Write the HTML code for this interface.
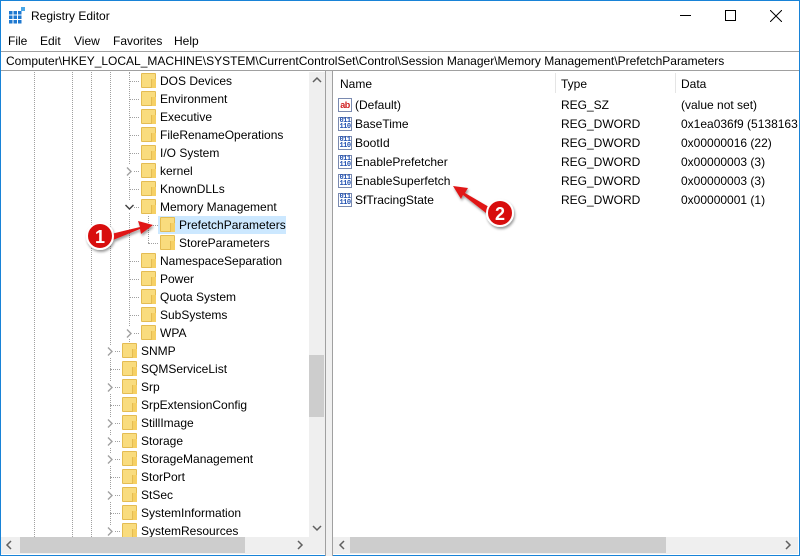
<!DOCTYPE html>
<html><head><meta charset="utf-8"><style>
*{margin:0;padding:0;box-sizing:border-box}
body{width:800px;height:556px;background:#fff;font-family:"Liberation Sans",sans-serif;font-size:12px;color:#000;position:relative;overflow:hidden}
.win{position:absolute;left:0;top:0;width:800px;height:556px;border:1px solid #1883d7}
.abs{position:absolute}
.t{position:absolute;white-space:nowrap;line-height:18px}
.fold{position:absolute;width:15px;height:15px;background:#f9dc7e;border:1px solid #e4bc52;border-radius:1px}
.fold:after{content:"";position:absolute;right:-1px;bottom:-1px;width:4px;height:9px;border-left:1px solid #e4bc52;background:#f6d064}
.vd{position:absolute;width:0;border-left:1px dotted #a0a0a0}
.hd{position:absolute;height:0;border-top:1px dotted #a0a0a0}
.chev{position:absolute}
.ic{position:absolute;width:14px;height:14px;border:1px solid #7a8ab0;background:#fff;font-size:7px;line-height:6px;color:#2050b0;font-weight:bold;letter-spacing:-0.5px;text-align:center;font-family:"Liberation Mono",monospace}
</style></head><body>
<div class="win"></div>
<svg class="abs" style="left:9px;top:7px" width="17" height="17" viewBox="0 0 17 17">
<g fill="#1e78d0"><rect x="0" y="4" width="3.5" height="3.5"/><rect x="4.5" y="4" width="3.5" height="3.5"/><rect x="9" y="4" width="3.5" height="3.5"/><rect x="0" y="8.5" width="3.5" height="3.5"/><rect x="4.5" y="8.5" width="3.5" height="3.5"/><rect x="9" y="8.5" width="3.5" height="3.5"/><rect x="0" y="13" width="3.5" height="3.5"/><rect x="4.5" y="13" width="3.5" height="3.5"/><rect x="9" y="13" width="3.5" height="3.5"/></g>
<rect x="12" y="0" width="4" height="4" fill="#4aa8e8"/></svg>
<div class="t" style="left:31px;top:7px;font-size:12px">Registry Editor</div>
<div class="abs" style="left:680px;top:15px;width:11px;border-top:1px solid #000"></div>
<div class="abs" style="left:725px;top:10px;width:11px;height:11px;border:1px solid #000"></div>
<svg class="abs" style="left:770px;top:10px" width="12" height="12"><path d="M0 0L12 12M12 0L0 12" stroke="#000" stroke-width="1"/></svg>
<div class="t" style="left:8px;top:32px">File</div>
<div class="t" style="left:40px;top:32px">Edit</div>
<div class="t" style="left:74px;top:32px">View</div>
<div class="t" style="left:113px;top:32px">Favorites</div>
<div class="t" style="left:174px;top:32px">Help</div>
<div class="abs" style="left:1px;top:51px;width:798px;height:20px;border-top:1px solid #a0a0a0;border-bottom:1px solid #a0a0a0"></div>
<div class="t" style="left:6px;top:52px">Computer\HKEY_LOCAL_MACHINE\SYSTEM\CurrentControlSet\Control\Session Manager\Memory Management\PrefetchParameters</div>
<div class="abs" style="left:1px;top:71px;width:324px;height:483px;background:#fff"></div>
<div class="vd" style="left:34px;top:72px;height:465px"></div>
<div class="vd" style="left:72px;top:72px;height:465px"></div>
<div class="vd" style="left:91px;top:72px;height:465px"></div>
<div class="vd" style="left:110px;top:72px;height:465px"></div>
<div class="vd" style="left:129px;top:72px;height:270px"></div>
<div class="vd" style="left:148px;top:216px;height:27px"></div>
<div id="tree"></div>
<div class="abs" style="left:309px;top:72px;width:16px;height:465px;background:#efefef"></div>
<div class="abs" style="left:309px;top:355px;width:15px;height:62px;background:#cdcdcd"></div>
<svg class="abs" style="left:312px;top:76px" width="10" height="8"><path d="M1 6L5 2L9 6" stroke="#606060" stroke-width="1.5" fill="none"/></svg>
<svg class="abs" style="left:312px;top:524px" width="10" height="8"><path d="M1 2L5 6L9 2" stroke="#606060" stroke-width="1.5" fill="none"/></svg>
<div class="abs" style="left:1px;top:537px;width:324px;height:17px;background:#efefef"></div>
<div class="abs" style="left:20px;top:537px;width:225px;height:16px;background:#cdcdcd"></div>
<svg class="abs" style="left:5px;top:540px" width="8" height="10"><path d="M6 1L2 5L6 9" stroke="#606060" stroke-width="1.5" fill="none"/></svg>
<svg class="abs" style="left:296px;top:540px" width="8" height="10"><path d="M2 1L6 5L2 9" stroke="#606060" stroke-width="1.5" fill="none"/></svg>
<div class="abs" style="left:325px;top:71px;width:8px;height:485px;background:#f0f0f0;border-left:1px solid #a0a0a0;border-right:1px solid #a0a0a0"></div>
<div class="abs" style="left:555px;top:73px;height:20px;border-left:1px solid #e5e5e5"></div>
<div class="abs" style="left:675px;top:73px;height:20px;border-left:1px solid #e5e5e5"></div>
<div class="t" style="left:340px;top:75px">Name</div>
<div class="t" style="left:561px;top:75px">Type</div>
<div class="t" style="left:681px;top:75px">Data</div>
<div id="vals"></div>
<div class="abs" style="left:333px;top:537px;width:465px;height:17px;background:#efefef"></div>
<div class="abs" style="left:350px;top:537px;width:316px;height:16px;background:#cdcdcd"></div>
<svg class="abs" style="left:338px;top:540px" width="8" height="10"><path d="M6 1L2 5L6 9" stroke="#606060" stroke-width="1.5" fill="none"/></svg>
<svg class="abs" style="left:784px;top:540px" width="8" height="10"><path d="M2 1L6 5L2 9" stroke="#606060" stroke-width="1.5" fill="none"/></svg>
<svg class="abs" style="left:0;top:0" width="800" height="556">
<defs><filter id="s"><feDropShadow dx="1" dy="2" stdDeviation="1.2" flood-opacity="0.4"/></filter></defs>
<g filter="url(#s)">
<path d="M111 234 L140 227 L138 221 L153 225 L141 234 L140 229 L113 240Z" fill="#e01818"/>
<circle cx="100" cy="236" r="13" fill="#d81010" stroke="#fff" stroke-width="2"/>
<path d="M489 207 L465 193 L468 188 L453 186 L461 199 L463 195 L486 213Z" fill="#e01818"/>
<circle cx="500" cy="213" r="13" fill="#d81010" stroke="#fff" stroke-width="2"/>
</g>
<text x="100" y="243" fill="#fff" font-family="Liberation Sans" font-weight="bold" font-size="18" text-anchor="middle">1</text>
<text x="500" y="220" fill="#fff" font-family="Liberation Sans" font-weight="bold" font-size="18" text-anchor="middle">2</text>
</svg>
<script>
var items=[["DOS Devices",1],["Environment",1],["Executive",1],["FileRenameOperations",1],["I/O System",1],["kernel",1,">"],["KnownDLLs",1],["Memory Management",1,"v"],["PrefetchParameters",2],["StoreParameters",2],["NamespaceSeparation",1],["Power",1],["Quota System",1],["SubSystems",1],["WPA",1,">"],["SNMP",0,">"],["SQMServiceList",0],["Srp",0,">"],["SrpExtensionConfig",0],["StillImage",0,">"],["Storage",0,">"],["StorageManagement",0,">"],["StorPort",0],["StSec",0,">"],["SystemInformation",0],["SystemResources",0,">"]];
var h="";
items.forEach(function(it,i){var y=72+i*18;var fx=[122,141,160][it[1]];var gx=[110,129,148][it[1]];
if(i==8)h+='<div class="abs" style="left:158px;top:'+y+'px;width:128px;height:18px;background:#cce8ff"></div>';
h+='<div class="hd" style="left:'+gx+'px;top:'+(y+9)+'px;width:'+(fx-gx-2)+'px"></div>';
if(it[2]){h+='<div class="abs" style="left:'+(gx-5)+'px;top:'+(y+3)+'px;width:10px;height:12px;background:#fff"></div>';
h+=it[2]==">"?'<svg class="abs" style="left:'+(gx-4)+'px;top:'+(y+4)+'px" width="8" height="11"><path d="M2 1.5L6 5.5L2 9.5" stroke="#a0a0a0" stroke-width="1.4" fill="none"/></svg>':'<svg class="abs" style="left:'+(gx-5)+'px;top:'+(y+5)+'px" width="11" height="8"><path d="M1.5 2L5.5 6L9.5 2" stroke="#404040" stroke-width="1.4" fill="none"/></svg>';}
h+='<div class="fold" style="left:'+fx+'px;top:'+(y+1)+'px"></div>';
h+='<div class="t" style="left:'+(fx+19)+'px;top:'+y+'px">'+it[0]+'</div>';});
document.getElementById("tree").innerHTML=h;
var v=[["(Default)","REG_SZ","(value not set)",1],["BaseTime","REG_DWORD","0x1ea036f9 (513816313)"],["BootId","REG_DWORD","0x00000016 (22)"],["EnablePrefetcher","REG_DWORD","0x00000003 (3)"],["EnableSuperfetch","REG_DWORD","0x00000003 (3)"],["SfTracingState","REG_DWORD","0x00000001 (1)"]];
var r="";v.forEach(function(x,i){var y=96+i*19;
r+=x[3]?'<div class="ic" style="left:338px;top:'+(y+2)+'px;color:#d02020;font-size:9px;line-height:12px;font-family:Liberation Sans">ab</div>':'<div class="ic" style="left:338px;top:'+(y+2)+'px">011<br>110</div>';
r+='<div class="t" style="left:355px;top:'+y+'px">'+x[0]+'</div><div class="t" style="left:561px;top:'+y+'px">'+x[1]+'</div><div class="t" style="left:681px;top:'+y+'px;width:117px;overflow:hidden">'+x[2]+'</div>';});
document.getElementById("vals").innerHTML=r;
</script>
</body></html>
